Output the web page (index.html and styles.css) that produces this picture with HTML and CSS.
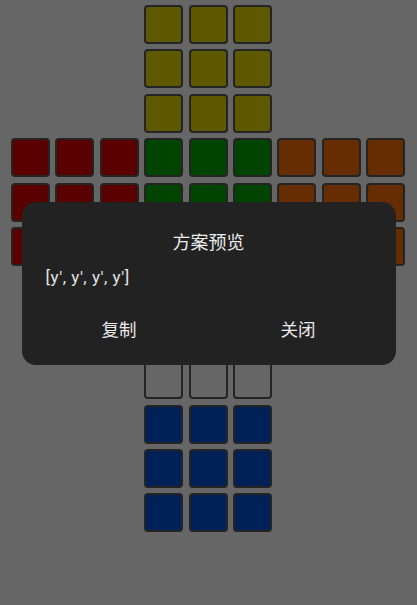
FILE: index.html
```html
<!DOCTYPE html>
<html lang="zh">
<head>
<meta charset="utf-8">
<title>方案预览</title>
<link rel="stylesheet" href="styles.css">
</head>
<body>
<div class="cube">
  <div class="face face-u">
    <div class="cell u"></div><div class="cell u"></div><div class="cell u"></div>
    <div class="cell u"></div><div class="cell u"></div><div class="cell u"></div>
    <div class="cell u"></div><div class="cell u"></div><div class="cell u"></div>
  </div>
  <div class="face face-l">
    <div class="cell l"></div><div class="cell l"></div><div class="cell l"></div>
    <div class="cell l"></div><div class="cell l"></div><div class="cell l"></div>
    <div class="cell l"></div><div class="cell l"></div><div class="cell l"></div>
  </div>
  <div class="face face-f">
    <div class="cell f"></div><div class="cell f"></div><div class="cell f"></div>
    <div class="cell f"></div><div class="cell f"></div><div class="cell f"></div>
    <div class="cell f"></div><div class="cell f"></div><div class="cell f"></div>
  </div>
  <div class="face face-r">
    <div class="cell r"></div><div class="cell r"></div><div class="cell r"></div>
    <div class="cell r"></div><div class="cell r"></div><div class="cell r"></div>
    <div class="cell r"></div><div class="cell r"></div><div class="cell r"></div>
  </div>
  <div class="face face-d">
    <div class="cell d"></div><div class="cell d"></div><div class="cell d"></div>
    <div class="cell d"></div><div class="cell d"></div><div class="cell d"></div>
    <div class="cell d"></div><div class="cell d"></div><div class="cell d"></div>
  </div>
  <div class="face face-b">
    <div class="cell b"></div><div class="cell b"></div><div class="cell b"></div>
    <div class="cell b"></div><div class="cell b"></div><div class="cell b"></div>
    <div class="cell b"></div><div class="cell b"></div><div class="cell b"></div>
  </div>
</div>

<div class="backdrop">
  <div class="dialog">
    <div class="dialog-title">方案预览</div>
    <div class="dialog-content">[y', y', y', y']</div>
    <div class="dialog-actions">
      <button class="dialog-btn">复制</button>
      <button class="dialog-btn">关闭</button>
    </div>
  </div>
</div>
</body>
</html>
```

FILE: styles.css
```css
html, body {
  margin: 0;
  padding: 0;
  background: #ffffff;
  font-family: "Noto Sans CJK SC", "Noto Sans", sans-serif;
}

.cube {
  display: grid;
  grid-template-columns: repeat(3, auto);
  justify-content: start;
  gap: 5.4px;
  padding: 5px 0 0 11px;
}

.face {
  display: grid;
  grid-template-columns: repeat(3, 39px);
  grid-auto-rows: 39px;
  gap: 5.4px;
}

.face-u { grid-column: 2; grid-row: 1; }
.face-l { grid-column: 1; grid-row: 2; }
.face-f { grid-column: 2; grid-row: 2; }
.face-r { grid-column: 3; grid-row: 2; }
.face-d { grid-column: 2; grid-row: 3; }
.face-b { grid-column: 2; grid-row: 4; }

.cell {
  box-sizing: border-box;
  border: 2px solid #5a5a5a;
  border-radius: 4px;
}

.u { background: #ebdc00; }
.l { background: #e10000; }
.f { background: #00aa00; }
.r { background: #ff7300; }
.d { background: #ffffff; }
.b { background: #0053dc; }

.backdrop {
  position: fixed;
  inset: 0;
  background: rgba(0, 0, 0, 0.6);
  display: flex;
  justify-content: center;
  align-items: flex-start;
  padding-top: 202px;
  box-sizing: border-box;
}

.dialog {
  width: 374px;
  height: 163px;
  box-sizing: border-box;
  background: #222222;
  border-radius: 14px;
  color: #eaeaea;
  display: flex;
  flex-direction: column;
}

.dialog-title {
  font-size: 18px;
  line-height: 26px;
  text-align: center;
  margin-top: 26px;
}

.dialog-content {
  font-family: Roboto, "Noto Sans CJK SC", sans-serif;
  font-size: 17px;
  letter-spacing: 0.5px;
  line-height: 24px;
  padding: 0 24px;
  margin-top: 11px;
  color: #e2e2e2;
}

.dialog-actions {
  display: flex;
  padding: 0 8px;
  margin-top: 27px;
}

.dialog-btn {
  flex: 1;
  background: transparent;
  border: none;
  color: #eaeaea;
  font-family: "Noto Sans CJK SC", sans-serif;
  font-size: 17.5px;
  line-height: 26px;
  padding: 0;
}
```
